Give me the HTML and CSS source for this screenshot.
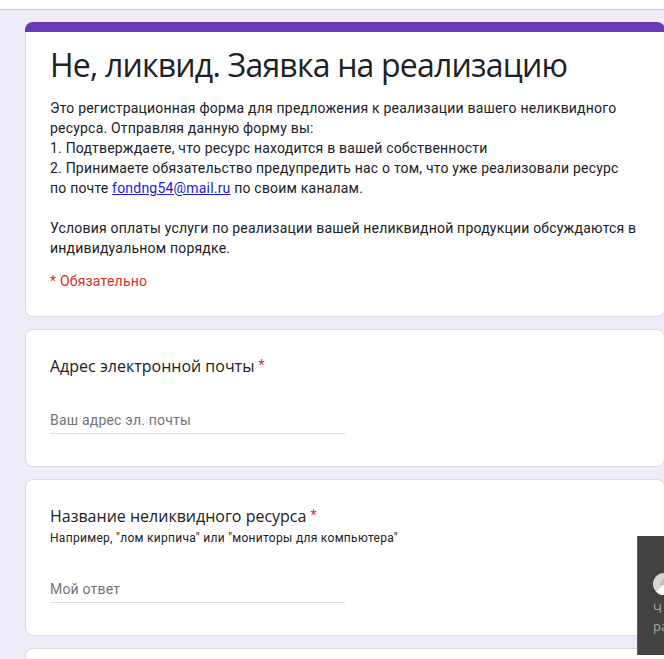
FILE: index.html
```html
<!DOCTYPE html>
<html lang="ru">
<head>
<meta charset="utf-8">
<title>Не, ликвид. Заявка на реализацию</title>
<link rel="stylesheet" href="styles.css">
</head>
<body>
<div class="topbar"></div>
<main class="page">
  <section class="card card-head">
    <div class="accent"></div>
    <div class="head-body">
      <h1 class="title">Не, ликвид. Заявка на реализацию</h1>
      <div class="desc">
        <div class="line">Это регистрационная форма для предложения к реализации вашего неликвидного</div>
        <div class="line">ресурса. Отправляя данную форму вы:</div>
        <div class="line">1. Подтверждаете, что ресурс находится в вашей собственности</div>
        <div class="line">2. Принимаете обязательство предупредить нас о том, что уже реализовали ресурс</div>
        <div class="line">по почте <a class="link" href="#">fondng54@mail.ru</a> по своим каналам.</div>
        <div class="line">&nbsp;</div>
        <div class="line">Условия оплаты услуги по реализации вашей неликвидной продукции обсуждаются в</div>
        <div class="line">индивидуальном порядке.</div>
      </div>
      <div class="required">* Обязательно</div>
    </div>
  </section>

  <section class="card question">
    <div class="label">Адрес электронной почты <span class="star">*</span></div>
    <div class="input input-email">Ваш адрес эл. почты</div>
  </section>

  <section class="card question">
    <div class="label">Название неликвидного ресурса <span class="star">*</span></div>
    <div class="help">Например, "лом кирпича" или "мониторы для компьютера"</div>
    <div class="input input-answer">Мой ответ</div>
  </section>

  <section class="card question card-next">
    <div class="label">&nbsp;</div>
  </section>
</main>

<aside class="widget">
  <svg class="widget-icon" width="22" height="22" viewBox="0 0 22 22" aria-hidden="true">
    <circle cx="11" cy="11" r="11" fill="#d6d6d6"/>
    <path d="M11 11 L22 11 A11 11 0 0 1 3.2 18.8 Z" fill="#ffffff"/>
    <path d="M11 4 L16 12 L6 12 Z" fill="#bdbdbd"/>
  </svg>
  <div class="widget-text">Ч<br>ра</div>
</aside>
</body>
</html>
```

FILE: styles.css
```css
html, body {
  margin: 0;
  padding: 0;
}

body {
  background: #f0ebf8;
  font-family: Roboto, "Noto Sans", Arial, sans-serif;
  color: #202124;
  overflow: hidden;
  height: 659px;
}

.topbar {
  height: 9px;
  background: #ffffff;
  border-bottom: 1px solid #c8c8cf;
}

.page {
  display: flex;
  flex-direction: column;
  gap: 12px;
  width: 640px;
  padding: 12px 0 0 25px;
}

.card {
  background: #ffffff;
  border: 1px solid #dadce0;
  border-radius: 8px;
  box-sizing: border-box;
  width: 640px;
}

.card-head {
  border-top: none;
}

.accent {
  height: 10px;
  margin: 0 -1px;
  background: #673ab7;
  border-radius: 8px 8px 0 0;
}

.head-body {
  padding: 13px 24px 25px 24px;
}

.title {
  margin: 0;
  font-family: "Open Sans", Roboto, sans-serif;
  font-weight: 400;
  font-size: 32px;
  line-height: 40px;
  letter-spacing: -0.8px;
  color: #202124;
  white-space: nowrap;
}

.desc {
  margin-top: 13px;
  font-size: 14px;
  line-height: 20px;
  letter-spacing: 0.2px;
  color: #202124;
}

.line {
  white-space: nowrap;
}

.link {
  color: #1a1ad8;
  text-decoration: underline;
}

.required {
  margin-top: 13px;
  font-size: 14px;
  line-height: 20px;
  letter-spacing: 0.2px;
  color: #d93025;
}

.question {
  padding: 24px 24px 32px 24px;
}

.label {
  font-family: "Open Sans", Roboto, sans-serif;
  font-size: 16px;
  line-height: 24px;
  height: 24px;
  color: #202124;
  white-space: nowrap;
}

.star {
  font-family: Roboto, sans-serif;
  font-size: 14px;
  line-height: 1;
  vertical-align: 2px;
  color: #d93025;
}

.help {
  margin-top: 2px;
  font-size: 12px;
  line-height: 16px;
  letter-spacing: 0.3px;
  color: #202124;
}

.input {
  width: 50%;
  font-size: 14px;
  line-height: 20px;
  letter-spacing: 0.2px;
  color: #70757a;
  padding-bottom: 3px;
  border-bottom: 1px solid #dadce0;
}

.input-email {
  margin-top: 32px;
}

.input-answer {
  margin-top: 33px;
}

.card-next {
  height: 60px;
}

.widget {
  position: fixed;
  left: 637px;
  top: 536px;
  width: 27px;
  height: 119px;
  box-sizing: border-box;
  background: #424242;
  border-left: 1px solid #5e5e5e;
  padding: 37px 0 0 15px;
  overflow: hidden;
}

.widget-icon {
  display: block;
}

.widget-text {
  margin-top: 4px;
  font-family: "Open Sans", Roboto, sans-serif;
  font-size: 13px;
  line-height: 18px;
  color: #a8a8a8;
  white-space: nowrap;
}
```
